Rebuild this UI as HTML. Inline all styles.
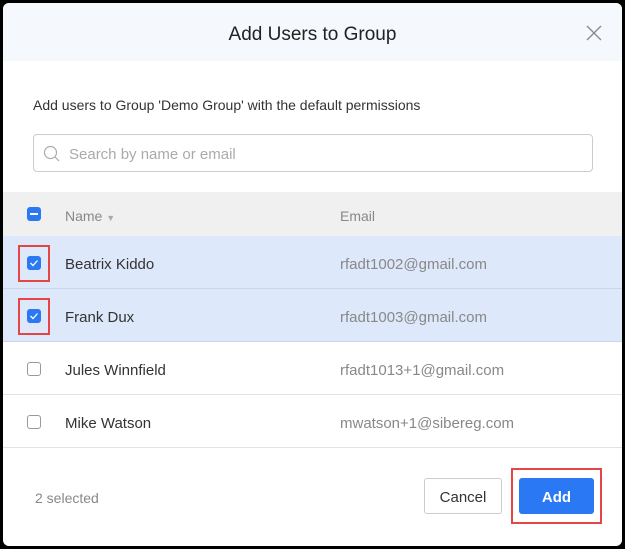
<!DOCTYPE html>
<html><head><style>
*{box-sizing:border-box;margin:0;padding:0}
body{width:625px;height:549px;background:#000;font-family:"Liberation Sans",sans-serif;position:relative;overflow:hidden}
.dlg{position:absolute;left:3px;top:3px;width:619px;height:543px;background:#fff;border-radius:6px;overflow:hidden}
.hdr{position:absolute;left:0;top:0;width:619px;height:58px;background:#f5f8fd;text-align:center;line-height:64px;font-size:19px;color:#222}
.x{position:absolute;right:20px;top:22px}
.a{position:absolute}
.desc{left:30px;top:94px;font-size:14px;color:#333}
.search{left:30px;top:131px;width:560px;height:38px;border:1px solid #ccc;border-radius:4px}
.search span{position:absolute;left:35px;top:11px;font-size:15px;color:#aaa}
.row{position:absolute;left:0;width:619px;height:53px;border-bottom:1px solid #e3e3e3}
.row .n{position:absolute;left:62px;top:20px;font-size:15px;color:#333}
.row .e{position:absolute;left:337px;top:20px;font-size:15px;color:#888}
.cb{position:absolute;left:24px;top:20px;width:14px;height:14px;border-radius:3px;border:1px solid #999;background:#fff}
.cb.on{background:#2b78f5;border-color:#2b78f5}
.red{position:absolute;border:2.5px solid #e64545}
</style></head><body>
<div class="dlg">
<div class="hdr">Add Users to Group
<svg class="x" width="16" height="16" viewBox="0 0 16 16"><path d="M1 1L15 15M15 1L1 15" stroke="#888" stroke-width="1.3"/></svg></div>
<div class="a desc">Add users to Group 'Demo Group' with the default permissions</div>
<div class="a search"><svg style="position:absolute;left:9px;top:10px" width="17" height="17" viewBox="0 0 17 17"><circle cx="7.5" cy="7.5" r="6" fill="none" stroke="#aaa" stroke-width="1.2"/><path d="M12 12L16 16" stroke="#aaa" stroke-width="1.2"/></svg><span>Search by name or email</span></div>
<div class="row" style="top:189px;height:44px;background:#f0f0f0;border:none">
<div class="cb on" style="top:15px"><div style="position:absolute;left:2px;top:5px;width:8px;height:2px;background:#fff"></div></div>
<div class="n" style="top:16px;color:#888;font-size:14px">Name <span style="font-size:9px;color:#aaa">▼</span></div>
<div class="e" style="top:16px;font-size:14px">Email</div></div>
<div class="row" style="top:233px;background:#dde8fb;border-color:#c8d5ea"><div class="cb on"><svg width="12" height="12" viewBox="0 0 12 12" style="position:absolute;left:0;top:0"><path d="M2.5 6L5 8.5L9.5 3.5" fill="none" stroke="#fff" stroke-width="1.3"/></svg></div><div class="n">Beatrix Kiddo</div><div class="e">rfadt1002@gmail.com</div></div>
<div class="row" style="top:286px;background:#dde8fb;border-color:#c8d5ea"><div class="cb on"><svg width="12" height="12" viewBox="0 0 12 12" style="position:absolute;left:0;top:0"><path d="M2.5 6L5 8.5L9.5 3.5" fill="none" stroke="#fff" stroke-width="1.3"/></svg></div><div class="n">Frank Dux</div><div class="e">rfadt1003@gmail.com</div></div>
<div class="row" style="top:339px"><div class="cb"></div><div class="n">Jules Winnfield</div><div class="e">rfadt1013+1@gmail.com</div></div>
<div class="row" style="top:392px"><div class="cb"></div><div class="n">Mike Watson</div><div class="e">mwatson+1@sibereg.com</div></div>
<div class="a" style="left:32px;top:487px;font-size:14px;color:#888">2 selected</div>
<div class="a" style="left:421px;top:475px;width:78px;height:36px;border:1px solid #ccc;border-radius:3px;text-align:center;line-height:38px;font-size:15px;color:#333">Cancel</div>
<div class="a" style="left:516px;top:475px;width:75px;height:36px;background:#2b78f5;border-radius:3px;text-align:center;line-height:40px;font-size:15px;font-weight:bold;color:#fff">Add</div>
</div>
<div class="red" style="left:18px;top:245px;width:32px;height:37px"></div>
<div class="red" style="left:18px;top:298px;width:32px;height:37px"></div>
<div class="red" style="left:511px;top:468px;width:91px;height:56px"></div>
</body></html>
